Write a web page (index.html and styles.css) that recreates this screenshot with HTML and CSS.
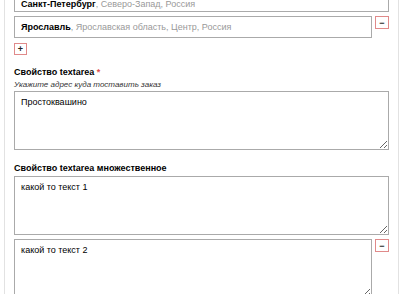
FILE: index.html
```html
<!DOCTYPE html>
<html lang="ru">
<head>
    <meta charset="UTF-8">
    <title>Форма</title>
    <link rel="stylesheet" href="styles.css">
</head>
<body>
    <div class="page">
        <div class="field field-list">
            <div class="multi">
                <div class="row">
                    <div class="input-box input-top"><b>Санкт-Петербург</b><span class="muted">, Северо-Запад, Россия</span></div>
                </div>
                <div class="row">
                    <div class="input-box"><b>Ярославль</b><span class="muted">, Ярославская область, Центр, Россия</span></div>
                    <button class="btn-small btn-remove" type="button">&minus;</button>
                </div>
            </div>
            <button class="btn-small btn-add" type="button">+</button>
        </div>

        <div class="field">
            <div class="label">Свойство textarea <span class="required">*</span></div>
            <div class="hint">Укажите адрес куда тоставить заказ</div>
            <textarea class="text">Простоквашино</textarea>
        </div>

        <div class="field">
            <div class="label">Свойство textarea множественное</div>
            <div class="multi">
                <div class="row">
                    <textarea class="text">какой то текст 1</textarea>
                </div>
                <div class="row">
                    <textarea class="text">какой то текст 2</textarea>
                    <button class="btn-small btn-remove" type="button">&minus;</button>
                </div>
            </div>
        </div>
    </div>
</body>
</html>
```

FILE: styles.css
```css
* {
    margin: 0;
    padding: 0;
    box-sizing: border-box;
}

body {
    font-family: "Liberation Sans", Arial, sans-serif;
    font-size: 9px;
    color: #000;
    background: #fff;
    overflow: hidden;
}

.page {
    margin: -10px 4px 0 4px;
    padding: 0 9px 40px 9px;
    border-left: 1px solid #e2e2e2;
    border-right: 1px solid #e2e2e2;
}

.field {
    margin-bottom: 13px;
}

.field-list {
    margin-bottom: 12px;
}

.multi {
    display: flex;
    flex-direction: column;
    gap: 4px;
}

.row {
    display: flex;
    align-items: flex-start;
    gap: 3px;
}

.input-box {
    flex: 1;
    height: 22px;
    line-height: 20px;
    padding: 0 6px;
    border: 1px solid #aaa;
    white-space: nowrap;
    overflow: hidden;
}

/* верхнее поле срезано краем окна */
.input-top {
    line-height: 26px;
}

.muted {
    color: #999;
}

.btn-small {
    width: 14px;
    height: 13px;
    border: 1px solid #e08a8a;
    background: #fff;
    color: #222;
    font-family: "Liberation Sans", Arial, sans-serif;
    font-size: 9px;
    font-weight: bold;
    line-height: 10px;
    cursor: pointer;
}

.btn-add {
    display: block;
    width: 13px;
    height: 12px;
    margin-top: 5px;
    line-height: 9px;
}

.label {
    font-weight: bold;
    line-height: 11px;
}

.required {
    color: #e05050;
}

.hint {
    font-style: italic;
    font-size: 8px;
    line-height: 11px;
    color: #333;
    margin-top: 1px;
    margin-bottom: 1px;
}

.text {
    display: block;
    flex: 1;
    width: 100%;
    height: 59px;
    padding: 5px 6px;
    border: 1px solid #aaa;
    font-family: "Liberation Sans", Arial, sans-serif;
    font-size: 9px;
    color: #000;
    resize: both;
}

.label + .multi {
    margin-top: 2px;
}
```
